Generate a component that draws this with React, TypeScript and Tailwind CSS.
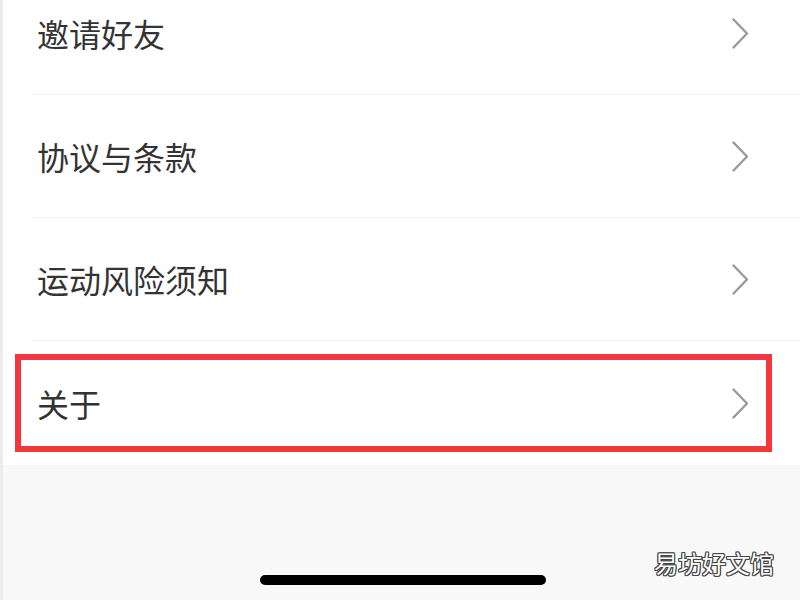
import React from "react";

const items = ["邀请好友", "协议与条款", "运动风险须知", "关于"];

function Chevron() {
  return (
    <svg width="17" height="31" viewBox="0 0 17 31" fill="none">
      <path d="M1.5 1.5 L15 15.5 L1.5 29.5" stroke="#9a9a9a" strokeWidth="2.4" strokeLinecap="round" strokeLinejoin="round" />
    </svg>
  );
}

export default function App() {
  return (
    <div
      className="relative w-[800px] h-[600px] overflow-hidden bg-[#f8f8f8] border-l-[3px] border-[#ececec]"
      style={{ fontFamily: '"Noto Sans CJK SC", "Noto Sans", sans-serif' }}
    >
      <div className="-mt-[28px] bg-white">
        {items.map((t, i) => (
          <div key={t} className="ml-[29px]">
            <div
              className={
                i < items.length - 1
                  ? "h-[123px] flex items-center justify-between pl-[5px] pr-[51px] border-b border-[#f1f1f1]"
                  : "h-[124px] flex items-center justify-between pl-[5px] pr-[51px]"
              }
            >
              <span className="text-[32px] leading-none text-[#333333] tracking-[0px]">{t}</span>
              <Chevron />
            </div>
          </div>
        ))}
      </div>

      <div className="absolute left-[12px] top-[354px] w-[757px] h-[98px] border-[6px] border-[#f3383d]" />

      <div className="absolute left-[257px] top-[575px] w-[286px] h-[10px] rounded-full bg-black" />

      <div
        className="absolute left-[651px] top-[551px] text-[24px] leading-none text-white"
        style={{
          WebkitTextStroke: "0px",
          textShadow:
            "1px 0 0 #444, -1px 0 0 #444, 0 1px 0 #444, 0 -1px 0 #444, 1px 1px 0 #444, -1px -1px 0 #444, 1px -1px 0 #444, -1px 1px 0 #444",
        }}
      >
        易坊好文馆
      </div>
    </div>
  );
}
